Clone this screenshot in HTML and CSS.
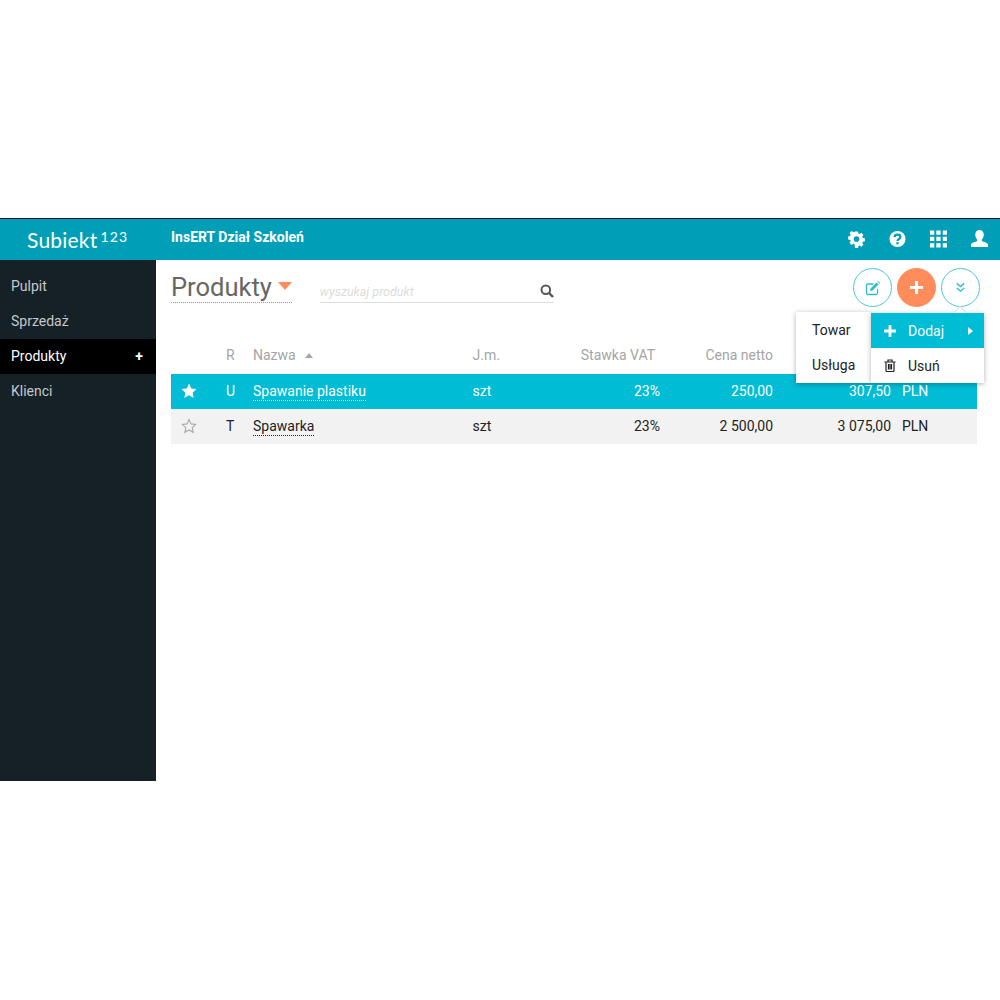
FILE: index.html
```html
<!DOCTYPE html>
<html>
<head>
    <title>Subiekt 123 - Produkty</title>
    <link rel="stylesheet" href="styles.css">
</head>
<body>
    <div class="app">
        <header class="topbar">
            <div class="logo">Subiekt<sup>123</sup></div>
            <div class="company">InsERT Dział Szkoleń</div>
            <div class="top-icons">
                <svg width="17" height="18" viewBox="0 0 18 18"><path fill="#fff" fill-rule="evenodd" d="M7.400 1h3.200l.4 2.200 1.300.6 1.900-1.300 2.200 2.200-1.300 1.900.6 1.300 2.200.4v3.200l-2.200.4-.6 1.300 1.300 1.900-2.200 2.200-1.900-1.300-1.300.6-.4 2.200H7.400L7 14.600l-1.300-.6-1.900 1.300-2.200-2.200 1.300-1.900-.6-1.300-2.200-.4V6.300l2.200-.4.6-1.300-1.300-1.900 2.200-2.200 1.900 1.300L7 1.200zM9 6a3 3 0 1 0 0 6 3 3 0 0 0 0-6z"/></svg>
                <svg width="17" height="18" viewBox="0 0 18 18"><circle cx="9" cy="9" r="8.500" fill="#fff"/><path fill="none" stroke="#009fb7" stroke-width="2.400" d="M5.800 7c.2-1.800 1.500-2.600 3.200-2.600 1.800 0 3.100 1 3.100 2.500 0 2.300-3.100 2.200-3.100 4.300"/><rect x="7.800" y="12.300" width="2.400" height="2.300" fill="#009fb7"/></svg>
                <svg width="17" height="18" viewBox="0 0 18 18"><path fill="#fff" d="M0 0h4.500v4.500H0zM6.700 0h4.500v4.500H6.700zM13.500 0H18v4.500h-4.500zM0 6.700h4.500v4.500H0zM6.700 6.700h4.500v4.500H6.700zM13.500 6.700H18v4.500h-4.500zM0 13.500h4.500V18H0zM6.700 13.500h4.500V18H6.700zM13.500 13.500H18V18h-4.500z"/></svg>
                <svg width="17" height="19" viewBox="0 0 18 18"><path fill="#fff" d="M9 0c2.700 0 4.500 2 4.500 5 0 2.300-1 4-2 5v1.500c0 1 5.500 1.500 6.500 3.500v3H0v-3c1-2 6.500-2.500 6.500-3.500V10c-1-1-2-2.700-2-5C4.500 2 6.300 0 9 0z"/></svg>
            </div>
        </header>
        <div class="layout">
            <nav class="sidebar">
                <a class="nav-item">Pulpit</a>
                <a class="nav-item">Sprzedaż</a>
                <a class="nav-item active">Produkty <span class="nav-plus">+</span></a>
                <a class="nav-item">Klienci</a>
            </nav>
            <main class="content">
                <div class="toolbar">
                    <div class="page-title">Produkty <span class="title-caret"></span></div>
                    <div class="search">
                        <span class="search-text">wyszukaj produkt</span>
                        <svg class="search-icon" width="14" height="14" viewBox="0 0 14 14"><circle cx="5.800" cy="5.800" r="4.300" fill="none" stroke="#555" stroke-width="2"/><path d="M9 9l4 4" stroke="#555" stroke-width="2.400"/></svg>
                    </div>
                    <div class="actions">
                        <div class="round-btn">
                            <svg width="17" height="16" viewBox="0 0 16 16"><path fill="none" stroke="#2bbcd4" stroke-width="1.300" d="M13 9v4a1.500 1.500 0 0 1-1.500 1.500h-8A1.500 1.500 0 0 1 2 13V5.500A1.500 1.500 0 0 1 3.500 4H9"/><path fill="#2bbcd4" d="M6 8.500L12 2.500l2 2-6 6-2.500.5zM12.800 1.700l.7-.7 2 2-.7.7z"/></svg>
                        </div>
                        <div class="round-btn add">
                            <svg width="13" height="13" viewBox="0 0 13 13"><path fill="#fff" d="M5 0h3v5h5v3H8v5H5V8H0V5h5z"/></svg>
                        </div>
                        <div class="round-btn">
                            <svg width="11" height="11" viewBox="0 0 12 12"><path fill="none" stroke="#2bbcd4" stroke-width="1.500" d="M2 1.500l4 3.500 4-3.500M2 6.500L6 10l4-3.500"/></svg>
                        </div>
                    </div>
                </div>

                <div class="grid-row grid-head">
                    <div></div>
                    <div>R</div>
                    <div>Nazwa <span class="sort-caret"></span></div>
                    <div>J.m.</div>
                    <div class="num head-vat">Stawka VAT</div>
                    <div class="num">Cena netto</div>
                    <div class="num"></div>
                    <div class="cur"></div>
                </div>
                <div class="grid-row selected">
                    <div class="star-cell">
                        <svg width="16" height="16" viewBox="0 0 16 16"><path fill="#fff" d="M8 .5l2.300 5 5.200.6-3.900 3.600 1.100 5.400L8 12.300l-4.700 2.800 1.100-5.400L.5 6.100l5.200-.6z"/></svg>
                    </div>
                    <div>U</div>
                    <div><span class="link">Spawanie plastiku</span></div>
                    <div>szt</div>
                    <div class="num">23%</div>
                    <div class="num">250,00</div>
                    <div class="num">307,50</div>
                    <div class="cur">PLN</div>
                </div>
                <div class="grid-row plain">
                    <div class="star-cell">
                        <svg width="16" height="16" viewBox="0 0 16 16"><path fill="none" stroke="#aaa" stroke-width="1.100" d="M8 1.500l2 4.400 4.600.5-3.400 3.200 1 4.700L8 11.900l-4.200 2.400 1-4.700-3.400-3.200 4.600-.5z"/></svg>
                    </div>
                    <div>T</div>
                    <div><span class="link">Spawarka</span></div>
                    <div>szt</div>
                    <div class="num">23%</div>
                    <div class="num">2 500,00</div>
                    <div class="num">3 075,00</div>
                    <div class="cur">PLN</div>
                </div>

                <div class="menu-wrap">
                    <div class="submenu">
                        <div class="submenu-item">Towar</div>
                        <div class="submenu-item">Usługa</div>
                    </div>
                    <div class="menu">
                        <div class="menu-arrow"></div>
                        <div class="menu-item on">
                            <svg width="12" height="12" viewBox="0 0 12 12"><path fill="#fff" d="M4.600 0h2.800v4.600H12v2.800H7.400V12H4.600V7.400H0V4.600h4.600z"/></svg>
                            <span>Dodaj</span>
                            <span class="menu-caret"></span>
                        </div>
                        <div class="menu-item">
                            <svg width="12" height="13" viewBox="0 0 12 13"><path fill="none" stroke="#222" stroke-width="1.200" d="M.5 3h11M4 3V1h4v2M2 3v8.500a1 1 0 0 0 1 1h6a1 1 0 0 0 1-1V3M4.500 5v5.500M6 5v5.500M7.500 5v5.500"/></svg>
                            <span>Usuń</span>
                        </div>
                    </div>
                </div>
            </main>
        </div>
    </div>
</body>
</html>
```

FILE: styles.css
```css
body {
    font-family: Roboto, 'Liberation Sans', sans-serif;
    font-size: 14px;
    background-color: #ffffff;
    color: #222222;
    margin: 0;
    padding: 0;
}
.app {
    margin-top: 218px;
    height: 563px;
    display: flex;
    flex-direction: column;
    border-top: 1px solid #111111;
    box-sizing: border-box;
}
.topbar {
    height: 41px;
    flex: none;
    display: flex;
    align-items: center;
    background-color: #009fb7;
    color: #ffffff;
}
.logo {
    width: 171px;
    box-sizing: border-box;
    padding-left: 27px;
    font-family: Lato, sans-serif;
    font-size: 21px;
    font-weight: 400;
    letter-spacing: 0.2px;
    white-space: nowrap;
}
.logo sup {
    margin-left: 3px;
    font-size: 14px;
    letter-spacing: 1.200px;
    line-height: 0;
    font-weight: 400;
    vertical-align: 6px;
}
.company {
    font-weight: 700;
    font-size: 14px;
    padding-bottom: 5px;
}
.top-icons {
    margin-left: auto;
    display: flex;
    align-items: center;
    gap: 24px;
    padding-right: 12px;
    padding-bottom: 2px;
}
.layout {
    flex: 1;
    display: flex;
}
.sidebar {
    width: 156px;
    flex: none;
    box-sizing: border-box;
    padding-top: 9px;
    background-color: #162127;
    color: #c4c8ca;
}
.nav-item {
    display: flex;
    justify-content: space-between;
    align-items: center;
    box-sizing: border-box;
    height: 35px;
    padding: 0 13px 2px 11px;
}
.nav-item.active {
    background-color: #000000;
    color: #ffffff;
}
.nav-plus {
    font-weight: 700;
}
.content {
    flex: 1;
    position: relative;
    padding: 8px 23px 0 15px;
}
.toolbar {
    display: flex;
    align-items: center;
    height: 39px;
    margin-bottom: 31px;
}
.page-title {
    display: flex;
    align-items: center;
    gap: 6px;
    height: 30px;
    font-size: 25.500px;
    color: #666666;
    border-bottom: 1px dotted #999999;
}
.title-caret {
    width: 0;
    height: 0;
    margin-top: -3px;
    border-left: 7.500px solid transparent;
    border-right: 7.500px solid transparent;
    border-top: 8px solid #ff8c5a;
}
.search {
    display: flex;
    justify-content: space-between;
    align-items: flex-end;
    box-sizing: border-box;
    width: 234px;
    height: 27px;
    margin: 3px 0 0 28px;
    padding-bottom: 3px;
    border-bottom: 1px solid #dddddd;
}
.search-text {
    font-size: 12.500px;
    font-style: italic;
    color: #dcdcdc;
}
.search-icon {
    margin-bottom: 1px;
}
.actions {
    margin-left: auto;
    margin-right: -3px;
    display: flex;
    gap: 5px;
}
.round-btn {
    width: 39px;
    height: 39px;
    box-sizing: border-box;
    border: 1px solid #4cc8dc;
    border-radius: 50%;
    display: flex;
    align-items: center;
    justify-content: center;
}
.round-btn.add {
    background-color: #ff8c5a;
    border-color: #ff8c5a;
}
.grid-row {
    display: grid;
    grid-template-columns: 55px 27px 219.500px 87.500px 100px 113px 118px 86px;
    align-items: center;
    box-sizing: border-box;
    height: 35px;
    padding-bottom: 2px;
}
.grid-head {
    height: 36px;
    color: #a5a5a5;
}
.head-vat {
    padding-right: 5px;
}
.num {
    text-align: right;
}
.cur {
    padding-left: 11px;
}
.sort-caret {
    display: inline-block;
    width: 0;
    height: 0;
    margin: 0 0 2px 6px;
    border-left: 4.500px solid transparent;
    border-right: 4.500px solid transparent;
    border-bottom: 5px solid #a5a5a5;
}
.selected {
    background-color: #00bcd4;
    color: #ffffff;
}
.plain {
    background-color: #f2f2f2;
}
.star-cell {
    display: flex;
    padding-left: 10px;
}
.link {
    padding-bottom: 1px;
    border-bottom: 1px dotted currentColor;
}
.menu-wrap {
    position: absolute;
    top: 52px;
    right: 16px;
    display: flex;
    align-items: flex-start;
}
.submenu {
    width: 75px;
    padding-top: 1px;
    background-color: #ffffff;
    box-shadow: 0 1px 5px rgba(0, 0, 0, 0.3);
}
.submenu-item {
    height: 35px;
    line-height: 35px;
    padding-left: 16px;
}
.menu {
    position: relative;
    width: 113px;
    margin-top: 1px;
    background-color: #ffffff;
    box-shadow: 0 1px 5px rgba(0, 0, 0, 0.3);
}
.menu-arrow {
    position: absolute;
    top: -5px;
    right: 19px;
    width: 9px;
    height: 9px;
    background-color: #ffffff;
    border-top: 1px solid #dddddd;
    border-left: 1px solid #dddddd;
    transform: rotate(45deg);
}
.menu-item {
    position: relative;
    display: flex;
    align-items: center;
    height: 35px;
    padding-left: 13px;
    gap: 12px;
}
.menu-item.on {
    background-color: #00bcd4;
    color: #ffffff;
}
.menu-caret {
    margin-left: auto;
    margin-right: 11px;
    width: 0;
    height: 0;
    border-top: 4.500px solid transparent;
    border-bottom: 4.500px solid transparent;
    border-left: 5px solid #ffffff;
}
```
